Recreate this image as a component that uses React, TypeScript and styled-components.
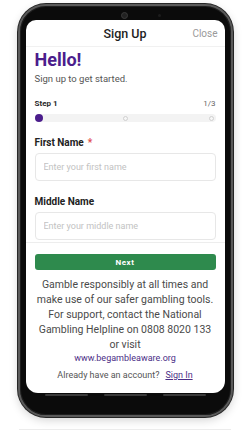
import React from "react";
import styled, { createGlobalStyle } from "styled-components";

const GlobalStyle = createGlobalStyle`
  html, body {
    margin: 0;
    padding: 0;
    background: #ffffff;
    font-family: Roboto, "Liberation Sans", Arial, sans-serif;
  }
  * {
    box-sizing: border-box;
  }
`;

const Page = styled.div`
  width: 250px;
  height: 431px;
  padding-top: 4px;
  display: flex;
  flex-direction: column;
  align-items: center;
  overflow: hidden;
`;

const Phone = styled.div`
  width: 215px;
  height: 413px;
  border-radius: 28px;
  border: 2px solid #5a5a5a;
  background: #0b0b0b;
  padding: 14px 6px 0 6px;
  display: flex;
  flex-direction: column;
  box-shadow: 0 0 0 1px #262626, 0 3px 10px rgba(0, 0, 0, 0.18),
    inset 0 0 0 1px #1e1e1e;
`;

const TopBezel = styled.div`
  height: 0;
  position: relative;
`;

const Camera = styled.span`
  position: absolute;
  left: 95px;
  top: -8px;
  width: 7px;
  height: 7px;
  border-radius: 50%;
  background: #222;
  border: 1px solid #3a3a3a;
`;

const Sensor = styled.span`
  position: absolute;
  left: 132px;
  top: -6px;
  width: 3px;
  height: 3px;
  border-radius: 50%;
  background: #1c1c1c;
`;

const Screen = styled.div`
  height: 373px;
  background: #ffffff;
  border-radius: 10px 10px 12px 12px;
  display: flex;
  flex-direction: column;
  overflow: hidden;
`;

const Header = styled.div`
  height: 27px;
  flex-shrink: 0;
  display: grid;
  grid-template-columns: 1fr auto 1fr;
  align-items: center;
  padding: 0 7px;
  border-bottom: 1px solid #f1f1f1;
`;

const Title = styled.div`
  grid-column: 2;
  font-size: 12.5px;
  font-weight: 500;
  color: #1e1e1e;
`;

const Close = styled.div`
  grid-column: 3;
  justify-self: end;
  font-size: 10px;
  color: #9a9a9a;
`;

const Body = styled.div`
  flex: 1;
  overflow: hidden;
  padding: 2px 9px 0 9px;
  display: flex;
  flex-direction: column;
`;

const Hello = styled.h1`
  margin: 0;
  font-size: 18px;
  line-height: 22px;
  font-weight: 700;
  color: #4b1d8c;
`;

const Sub = styled.p`
  margin: 2px 0 0 0;
  font-size: 9.5px;
  line-height: 12px;
  color: #555;
`;

const StepRow = styled.div`
  margin-top: 14px;
  display: flex;
  justify-content: space-between;
  align-items: center;
  font-size: 8px;
  line-height: 10px;
`;

const StepLabel = styled.span`
  font-weight: 700;
  color: #2a2a2a;
`;

const StepCount = styled.span`
  color: #666;
`;

const Track = styled.div`
  margin-top: 5px;
  height: 8px;
  border-radius: 4px;
  background: #f3f3f3;
  display: flex;
  justify-content: space-between;
  align-items: center;
  padding-right: 2px;
`;

const Marker = styled.span<{ $active?: boolean }>`
  width: ${({ $active }) => ($active ? "8px" : "5px")};
  height: ${({ $active }) => ($active ? "8px" : "5px")};
  border-radius: 50%;
  background: ${({ $active }) => ($active ? "#4b1d8c" : "#f7f7f7")};
  border: ${({ $active }) => ($active ? "none" : "1px solid #cfcfcf")};
`;

const Field = styled.div<{ $gap: number }>`
  display: flex;
  flex-direction: column;
  margin-top: ${({ $gap }) => $gap}px;
`;

const Label = styled.label`
  font-size: 10px;
  line-height: 12px;
  font-weight: 700;
  color: #222;
`;

const Star = styled.span`
  color: #e04b4b;
  margin-left: 4px;
`;

const Input = styled.input`
  margin-top: 4px;
  height: 28px;
  width: 100%;
  border: 1px solid #e7e7e7;
  border-radius: 4px;
  padding: 0 8px;
  font-family: inherit;
  font-size: 9px;
  color: #333;
  outline: none;
  &::placeholder {
    color: #c2c2c2;
  }
`;

const Footer = styled.div`
  flex-shrink: 0;
  border-top: 1px solid #ededed;
  padding: 11px 9px 12px 9px;
  display: flex;
  flex-direction: column;
  align-items: center;
`;

const NextButton = styled.button`
  width: 100%;
  height: 16px;
  border: none;
  border-radius: 3px;
  background: #2e8a4d;
  color: #fff;
  font-family: inherit;
  font-size: 8px;
  font-weight: 700;
  letter-spacing: 0.6px;
  padding: 0;
`;

const Notice = styled.p`
  margin: 7px 0 0 0;
  font-size: 10.5px;
  line-height: 15px;
  color: #4a4a4a;
  text-align: center;
`;

const Link = styled.a`
  font-size: 9px;
  line-height: 12px;
  color: #4b2e86;
  text-decoration: none;
`;

const Account = styled.div`
  margin-top: 5px;
  font-size: 9px;
  line-height: 12px;
  color: #555;
  display: flex;
  gap: 6px;
`;

const SignIn = styled.a`
  color: #4b2e86;
  text-decoration: underline;
`;

const BottomBezel = styled.div`
  flex: 1;
  display: flex;
  justify-content: center;
  gap: 16px;
  padding-top: 1px;
`;

const NavLine = styled.span`
  width: 43px;
  height: 2px;
  border-radius: 1px;
  background: #3a3a3a;
`;

const Floor = styled.div`
  margin-top: 12px;
  width: 212px;
  height: 1px;
  background: #ececec;
`;

export default function App() {
  return (
    <Page>
      <GlobalStyle />
      <Phone>
        <TopBezel>
          <Camera />
          <Sensor />
        </TopBezel>
        <Screen>
          <Header>
            <Title>Sign Up</Title>
            <Close>Close</Close>
          </Header>
          <Body>
            <Hello>Hello!</Hello>
            <Sub>Sign up to get started.</Sub>
            <StepRow>
              <StepLabel>Step 1</StepLabel>
              <StepCount>1/3</StepCount>
            </StepRow>
            <Track>
              <Marker $active />
              <Marker />
              <Marker />
            </Track>
            <Field $gap={15}>
              <Label>
                First Name<Star>*</Star>
              </Label>
              <Input placeholder="Enter your first name" />
            </Field>
            <Field $gap={15}>
              <Label>Middle Name</Label>
              <Input placeholder="Enter your middle name" />
            </Field>
          </Body>
          <Footer>
            <NextButton>Next</NextButton>
            <Notice>
              Gamble responsibly at all times and make use of our safer
              gambling tools. For support, contact the National Gambling
              Helpline on 0808 8020 133 or visit
            </Notice>
            <Link href="#">www.begambleaware.org</Link>
            <Account>
              <span>Already have an account?</span>
              <SignIn href="#">Sign In</SignIn>
            </Account>
          </Footer>
        </Screen>
        <BottomBezel>
          <NavLine />
          <NavLine />
          <NavLine />
        </BottomBezel>
      </Phone>
      <Floor />
    </Page>
  );
}
